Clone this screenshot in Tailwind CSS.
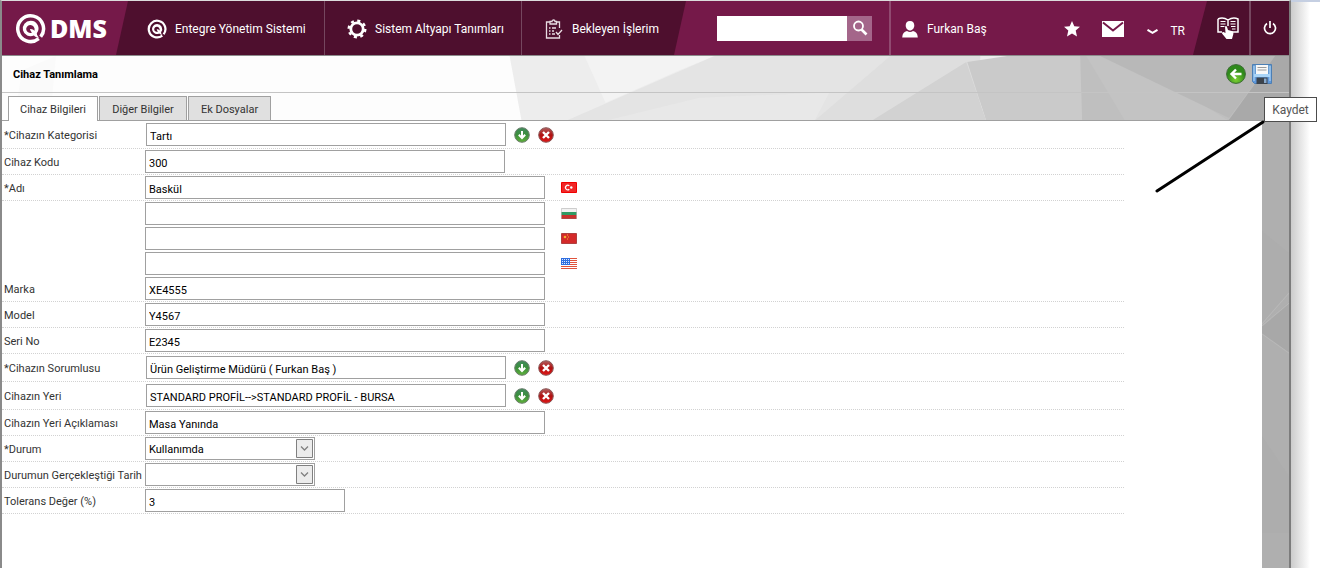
<!DOCTYPE html>
<html lang="tr">
<head>
<meta charset="utf-8">
<meta name="viewport" content="width=device-width, initial-scale=1">
<title>QDMS - Cihaz Tanımlama</title>
<script src="https://cdn.jsdelivr.net/npm/@tailwindcss/browser@4"></script>
</head>
<body class="relative flex min-h-screen overflow-x-hidden bg-white font-['Roboto','Noto_Sans',sans-serif] text-[11px] text-[#333]">

<svg class="absolute size-0" aria-hidden="true">
  <defs>
    <linearGradient id="green" x1="0" y1="0" x2="0" y2="1"><stop offset="0" stop-color="#3f8a5c"/><stop offset=".5" stop-color="#3c8f3c"/><stop offset="1" stop-color="#5fb13a"/></linearGradient>
    <linearGradient id="red" x1="0" y1="0" x2="0" y2="1"><stop offset="0" stop-color="#b06060"/><stop offset=".5" stop-color="#b01010"/><stop offset="1" stop-color="#e01818"/></linearGradient>
    <symbol id="pick" viewBox="0 0 16 16"><circle cx="8" cy="8" r="7.300" fill="url(#green)" stroke="#6b7d6c"/><path d="M8 4v7M4.800 7.800 8 11l3.200-3.200" fill="none" stroke="#fff" stroke-width="2"/></symbol>
    <symbol id="clear" viewBox="0 0 16 16"><circle cx="8" cy="8" r="7.300" fill="url(#red)" stroke="#8a5a5a"/><path d="m5 5 6 6M11 5l-6 6" stroke="#fff" stroke-width="2.400"/></symbol>
    <symbol id="q" viewBox="0 0 32 32"><path d="M26.500 24.500A13.300 13.300 0 1 0 24.500 26.500" fill="none" stroke="currentColor" stroke-width="3.600"/><path d="M16 8a8 8 0 1 0 3.500 15.200c1.500 1.500 3.300 2.300 5.500 2.300-1.500-1-2.300-2.300-2.500-4.500A8 8 0 0 0 16 8Zm-.5 4.500a4.500 4.500 0 0 1 4.500 6c-1-1.500-2.500-2.200-4.500-2 .2 1.400.8 2.500 2 3.500a4 4 0 1 1-2-7.500Z" fill="currentColor" fill-rule="evenodd"/></symbol>
  </defs>
</svg>

<div class="flex min-w-0 flex-1 flex-col border-t border-r-2 border-l-2 border-t-[#dcdcdc] border-r-[#7c7c7c] border-l-[#8a8a8a]">
  <header class="flex h-[55px] border-b border-[#8c8c8c] bg-[#751949] text-[12px] text-white">
    <a href="#" aria-label="QDMS" class="flex w-[114px] shrink-0 items-center gap-1 pl-[13px]">
      <svg class="size-[31px] shrink-0"><use href="#q"/></svg>
      <span class="font-['Open_Sans',sans-serif] text-[25px] leading-none font-extrabold">DMS</span>
    </a>
    <nav class="flex w-[570px] shrink-0 bg-[#4e0f2e] [clip-path:polygon(12px_0,100%_0,calc(100%-12px)_100%,0_100%)]">
      <a href="#" class="flex w-[209px] items-center gap-2 border-r border-[#75475f] pt-[2px] pl-[31px]">
        <svg class="size-5"><use href="#q"/></svg>Entegre Yönetim Sistemi</a>
      <a href="#" class="flex w-[197px] items-center gap-2 border-r border-[#75475f] pt-[2px] pl-[22px]">
        <svg class="size-5" viewBox="0 0 20 20"><circle cx="10" cy="10" r="6.200" fill="none" stroke="#fff" stroke-width="2.800"/><circle cx="10" cy="10" r="8.300" fill="none" stroke="#fff" stroke-width="2.400" stroke-dasharray="3.100 3.419"/></svg>Sistem Altyapı Tanımları</a>
      <a href="#" class="flex flex-1 items-center gap-2 pt-[2px] pl-[22px]">
        <svg class="size-5" viewBox="0 0 20 20" fill="none" stroke="#e8dce2" stroke-width="1.300"><path d="M6 3H2.500v16h13v-3M12 3h3.500v6M6 2.500h2C8 .500 11 .500 11 2.500h1.500V5h-6.500zM12 13l2 2.500 4-4.500"/><path d="M5 9h1.500M8 9h4M5 12h1.500M8 12h2M5 15h1.500M8 15h3"/></svg>Bekleyen İşlerim</a>
    </nav>
    <form class="ml-[31px] flex shrink-0 items-center">
      <input type="search" aria-label="Ara" class="h-[25px] w-[130px] bg-white px-1 text-black outline-none">
      <button type="button" aria-label="Ara" class="grid h-[25px] w-[25px] place-items-center bg-[#a4668a]">
        <svg class="size-4" viewBox="0 0 16 16" fill="none" stroke="#fff"><circle cx="6.500" cy="6" r="4.500" stroke-width="1.800"/><path d="m9.500 9.500 5 5" stroke-width="2.600"/></svg>
      </button>
    </form>
    <div class="ml-[17px] flex flex-1 items-center border-l-2 border-[#904a70] pt-[2px] pl-[10px]">
      <svg class="mr-[8px] size-[18px]" viewBox="0 0 18 18" fill="#fff"><path d="M9 1c3 0 4.300 2 4.300 4.500S11.500 10.500 9 10.500 4.700 8 4.700 5.500 6 1 9 1ZM6 11c2 1.200 4 1.200 6 0 3 .5 4.500 2.500 4.800 6.500H1.200C1.500 13.500 3 11.500 6 11Z"/></svg>
      <span>Furkan Baş</span>
      <button type="button" aria-label="Favoriler" class="mr-[22px] ml-auto"><svg class="size-4" viewBox="0 0 16 16" fill="#fff"><path d="m8 0 2.300 5.200 5.700.6-4.300 3.800L13 15.500l-5-3-5 3 1.300-5.900L0 5.800l5.700-.6z"/></svg></button>
      <button type="button" aria-label="Mesajlar" class="mr-[23px]"><svg class="h-4 w-[22px]" viewBox="0 0 22 16"><path d="M0 0h22v16H0z" fill="#fff"/><path d="m1 1.500 10 8 10-8" fill="none" stroke="#751949" stroke-width="2"/></svg></button>
      <button type="button" class="mr-[8px] flex items-center gap-3 pt-1"><svg class="h-[5px] w-[11px]" viewBox="0 0 11 5" fill="none" stroke="#fff" stroke-width="2"><path d="M.5.800 5.500 3.800 10.500.8"/></svg>TR</button>
    </div>
    <div class="flex w-[96px] shrink-0 bg-[#4e0f2e] [clip-path:polygon(14px_0,100%_0,100%_100%,0_100%)]">
      <button type="button" aria-label="Yardım" class="w-[58px] border-r-2 border-[#75475f] pl-[24px]">
        <svg class="h-[23px] w-[22px]" viewBox="0 0 22 23"><path d="M1 2c4-2 7-1 10 1 3-2 6-3 10-1v13h-6M1 2v13h4M11 3v6" fill="none" stroke="#fff" stroke-width="1.500"/><path d="M3.500 4.500h5M3.500 7h5M3.500 9.500h4M13.500 4.500h5M13.500 7h5M14 9.500h4.500M15 12h3.500" stroke="#fff"/><path d="M8 9.500q1.300-1 2 .5l1 3 4.500 1.200q1.500.8.800 3L15 22H9.500L5 16.500q-.3-1.800 1.500-1.500L8.500 16z" fill="#fff"/></svg>
      </button>
      <button type="button" aria-label="Çıkış" class="grid flex-1 place-items-center">
        <svg class="size-[14px]" viewBox="0 0 14 14" fill="none" stroke="#fff" stroke-width="1.700"><path d="M4 2.500a5.500 5.500 0 1 0 6 0M7 0v7"/></svg>
      </button>
    </div>
  </header>

  <div class="relative">
    <svg class="absolute inset-0 h-full w-full" viewBox="2 56 1288 64" preserveAspectRatio="none" aria-hidden="true">
      <path d="M0 56h1290v64H0z" fill="#fdfdfd"/>
      <path d="M22 70 56 56l-6 64H14z" fill="#fafafa"/>
      <path d="M510 56h780v64H522z" fill="#ededed"/>
      <path d="M585 56h130l-35 14-74 32z" fill="#f3f3f3"/>
      <path d="M715 56h200v64H566z" fill="#e4e4e4"/>
      <path d="m700 97 130-5-15 28H605z" fill="#e8e8e8"/>
      <path d="M891 56h90v64H815z" fill="#dedede"/>
      <path d="M967 62l20 58H872z" fill="#d2d2d2"/>
      <path d="M968 62l40-6h90v64H987z" fill="#cacaca"/>
      <path d="M1081 56h209v64h-207z" fill="#bfbfbf"/>
      <path d="M1087 56h40l103 64h-104z" fill="#c3c3c3"/>
      <path d="M1101 56h175l-46 61z" fill="#b8b8b8"/>
      <path d="M1276 56h14v64h-61z" fill="#a9a9a9"/>
    </svg>
    <div class="relative flex h-[37px] items-center border-b border-[#c4c4c4] pr-[17px] pl-[11px]">
      <h1 class="flex-1 pt-[2px] font-bold text-black">Cihaz Tanımlama</h1>
      <button type="button" aria-label="Geri" class="mr-[6px]">
        <svg class="size-5" viewBox="0 0 20 20"><defs><radialGradient id="back" cy=".8"><stop offset="0" stop-color="#7cd032"/><stop offset="1" stop-color="#2f8a1c"/></radialGradient></defs><circle cx="10" cy="10" r="9.400" fill="url(#back)" stroke="#3d6b35"/><path d="M15.500 10H6M10 5.500 5.500 10l4.500 4.500" fill="none" stroke="#fff" stroke-width="2.400"/></svg>
      </button>
      <button type="button" aria-label="Kaydet">
        <svg class="size-5" viewBox="0 0 20 20"><defs><linearGradient id="disk" x1="0" y1="0" x2="0" y2="1"><stop offset="0" stop-color="#6d9fd0"/><stop offset="1" stop-color="#5c96dc"/></linearGradient></defs><path d="M.5.500h19v19h-17l-2-2z" fill="url(#disk)" stroke="#4c7fb5"/><path d="M2 2v15M18 2v15" stroke="#b9dcf8"/><path d="M4 1h12v9H4z" fill="#f8f8f8"/><path d="M5.500 3.500h9M5.500 6h9" stroke="#9a9a9a"/><path d="M2 10h16v3H2z" fill="#a9d4f7"/><path d="M4.500 13.500h11V20h-11z" fill="#3c434c"/><path d="M12 14.500h2.500V19H12z" fill="#88a9cc"/></svg>
      </button>
    </div>
    <div role="tablist" class="relative flex h-7 items-end gap-px border-b border-[#a0a0a0] pl-[6px]">
      <button role="tab" aria-selected="true" type="button" class="-mb-px h-[25px] w-[90px] border border-b-0 border-[#a0a0a0] bg-white pt-[2px]">Cihaz Bilgileri</button>
      <button role="tab" aria-selected="false" type="button" class="h-6 w-[88px] border border-b-0 border-[#a0a0a0] bg-[#e0e0e0] pt-[3px]">Diğer Bilgiler</button>
      <button role="tab" aria-selected="false" type="button" class="h-6 w-[83px] border border-b-0 border-[#a0a0a0] bg-[#e0e0e0] pt-[3px]">Ek Dosyalar</button>
    </div>
  </div>

  <div class="flex flex-1">
    <form class="min-w-0 flex-1 bg-white pr-[138px] text-[#333]">
      <div class="flex h-7 items-center border-b border-dotted border-[#d2d2d2]">
        <label for="kategori" class="w-[144px] shrink-0 pt-[3px] pl-[2px] whitespace-nowrap">*Cihazın Kategorisi</label>
        <input id="kategori" value="Tartı" class="h-[23px] w-[360px] border border-[#a0a0a0] px-[3px] pt-[4px] text-black">
        <button type="button" aria-label="Seç" class="ml-2"><svg class="size-4"><use href="#pick"/></svg></button>
        <button type="button" aria-label="Temizle" class="ml-2"><svg class="size-4"><use href="#clear"/></svg></button>
      </div>
      <div class="flex h-[26px] items-center border-b border-dotted border-[#d2d2d2]">
        <label for="kod" class="w-[143px] shrink-0 pt-[3px] pl-[2px] whitespace-nowrap">Cihaz Kodu</label>
        <input id="kod" value="300" class="h-[23px] w-[360px] border border-[#a0a0a0] px-[3px] pt-[4px] text-black">
      </div>
      <div class="flex h-[26px] items-center border-b border-dotted border-[#d2d2d2]">
        <label for="adi" class="w-[143px] shrink-0 pt-[3px] pl-[2px] whitespace-nowrap">*Adı</label>
        <input id="adi" value="Baskül" class="h-[23px] w-[400px] border border-[#a0a0a0] px-[3px] pt-[4px] text-black">
        <svg class="ml-4 h-[11px] w-4" viewBox="0 0 16 11" role="img" aria-label="Türkçe"><path d="M.5.500h15v10H.5z" fill="#f02828" stroke="#f00000"/><path d="M8.300 3.800a2.300 2.300 0 1 0 0 3.500" fill="none" stroke="#fff" stroke-width="1.200"/><circle cx="10.300" cy="5.500" r="1.200" fill="#fff"/></svg>
      </div>
      <div class="flex h-[25px] items-center pl-[143px]">
        <input aria-label="Adı (Bulgarca)" class="h-[23px] w-[400px] border border-[#a0a0a0] px-[3px] text-black">
        <svg class="ml-4 h-[11px] w-4" viewBox="0 0 16 11" role="img" aria-label="Bulgarca"><path d="M.5 0h15v4H.5z" fill="#f2f2f2"/><path d="M.5 4h15v3H.5z" fill="#2f9a63"/><path d="M.5 7h15v4H.5z" fill="#c8322e"/><path d="M.5.500h15v10H.5z" fill="none" stroke="#777" stroke-opacity=".3"/></svg>
      </div>
      <div class="flex h-[25px] items-center pl-[143px]">
        <input aria-label="Adı (Çince)" class="h-[23px] w-[400px] border border-[#a0a0a0] px-[3px] text-black">
        <svg class="ml-4 h-[11px] w-4" viewBox="0 0 16 11" role="img" aria-label="Çince"><path d="M.5.500h15v10H.5z" fill="#d42a2a" stroke="#b04040"/><circle cx="4" cy="4" r="1.300" fill="#f4b030"/><path d="M6 2h1M7 4h1M6 6h1" stroke="#f4b030"/></svg>
      </div>
      <div class="flex h-[25px] items-center pl-[143px]">
        <input aria-label="Adı (İngilizce)" class="h-[23px] w-[400px] border border-[#a0a0a0] px-[3px] text-black">
        <svg class="ml-4 h-[11px] w-4" viewBox="0 0 16 11" role="img" aria-label="İngilizce"><path d="M0 0h16v11H0z" fill="#fff"/><path d="M0 .5h16M0 2.500h16M0 4.500h16M0 6.500h16M0 8.500h16M0 10.500h16" stroke="#e0523c"/><path d="M0 0h9v7H0z" fill="#2f6fe0"/><path d="M1 1.500h8M1 3.500h8M1 5.500h8" stroke="#dfe8ff" stroke-dasharray="1 1"/></svg>
      </div>
      <div class="flex h-[26px] items-center border-b border-dotted border-[#d2d2d2]">
        <label for="marka" class="w-[143px] shrink-0 pt-[3px] pl-[2px] whitespace-nowrap">Marka</label>
        <input id="marka" value="XE4555" class="h-[23px] w-[400px] border border-[#a0a0a0] px-[3px] pt-[4px] text-black">
      </div>
      <div class="flex h-[26px] items-center border-b border-dotted border-[#d2d2d2]">
        <label for="model" class="w-[143px] shrink-0 pt-[3px] pl-[2px] whitespace-nowrap">Model</label>
        <input id="model" value="Y4567" class="h-[23px] w-[400px] border border-[#a0a0a0] px-[3px] pt-[4px] text-black">
      </div>
      <div class="flex h-[26px] items-center border-b border-dotted border-[#d2d2d2]">
        <label for="seri" class="w-[143px] shrink-0 pt-[3px] pl-[2px] whitespace-nowrap">Seri No</label>
        <input id="seri" value="E2345" class="h-[23px] w-[400px] border border-[#a0a0a0] px-[3px] pt-[4px] text-black">
      </div>
      <div class="flex h-7 items-center border-b border-dotted border-[#d2d2d2]">
        <label for="sorumlu" class="w-[144px] shrink-0 pt-[3px] pl-[2px] whitespace-nowrap">*Cihazın Sorumlusu</label>
        <input id="sorumlu" value="Ürün Geliştirme Müdürü ( Furkan Baş )" class="h-[23px] w-[360px] border border-[#a0a0a0] px-[3px] pt-[4px] text-black">
        <button type="button" aria-label="Seç" class="ml-2"><svg class="size-4"><use href="#pick"/></svg></button>
        <button type="button" aria-label="Temizle" class="ml-2"><svg class="size-4"><use href="#clear"/></svg></button>
      </div>
      <div class="flex h-7 items-center border-b border-dotted border-[#d2d2d2]">
        <label for="yer" class="w-[144px] shrink-0 pt-[3px] pl-[2px] whitespace-nowrap">Cihazın Yeri</label>
        <input id="yer" value="STANDARD PROFİL--&gt;STANDARD PROFİL - BURSA" class="h-[23px] w-[360px] border border-[#a0a0a0] px-[3px] pt-[4px] text-black">
        <button type="button" aria-label="Seç" class="ml-2"><svg class="size-4"><use href="#pick"/></svg></button>
        <button type="button" aria-label="Temizle" class="ml-2"><svg class="size-4"><use href="#clear"/></svg></button>
      </div>
      <div class="flex h-[26px] items-center border-b border-dotted border-[#d2d2d2]">
        <label for="aciklama" class="w-[143px] shrink-0 pt-[3px] pl-[2px] whitespace-nowrap">Cihazın Yeri Açıklaması</label>
        <input id="aciklama" value="Masa Yanında" class="h-[23px] w-[400px] border border-[#a0a0a0] px-[3px] pt-[4px] text-black">
      </div>
      <div class="flex h-[26px] items-center border-b border-dotted border-[#d2d2d2]">
        <label for="durum" class="w-[143px] shrink-0 pt-[3px] pl-[2px] whitespace-nowrap">*Durum</label>
        <div class="relative">
          <select id="durum" class="block h-[23px] w-[170px] appearance-none border border-[#a0a0a0] px-[3px] pt-[4px] text-black"><option>Kullanımda</option></select>
          <svg class="pointer-events-none absolute top-[2px] right-[2px] h-[19px] w-[17px]" viewBox="0 0 17 19" fill="none" stroke="#808080"><path d="M.5.500h16v18H.5z" fill="#ececec"/><path d="m5 7.500 3.500 3.500L12 7.500" stroke-width="1.300"/></svg>
        </div>
      </div>
      <div class="flex h-[26px] items-center border-b border-dotted border-[#d2d2d2]">
        <label for="tarih" class="w-[143px] shrink-0 pt-[3px] pl-[2px] whitespace-nowrap">Durumun Gerçekleştiği Tarih</label>
        <div class="relative">
          <select id="tarih" class="block h-[23px] w-[170px] appearance-none border border-[#a0a0a0] px-[3px] pt-[4px] text-black"><option></option></select>
          <svg class="pointer-events-none absolute top-[2px] right-[2px] h-[19px] w-[17px]" viewBox="0 0 17 19" fill="none" stroke="#808080"><path d="M.5.500h16v18H.5z" fill="#ececec"/><path d="m5 7.500 3.500 3.500L12 7.500" stroke-width="1.300"/></svg>
        </div>
      </div>
      <div class="flex h-[26px] items-center border-b border-dotted border-[#d2d2d2]">
        <label for="tolerans" class="w-[143px] shrink-0 pt-[3px] pl-[2px] whitespace-nowrap">Tolerans Değer (%)</label>
        <input id="tolerans" value="3" class="h-[23px] w-[200px] border border-[#a0a0a0] px-[3px] pt-[4px] text-black">
      </div>
    </form>
    <div class="w-[27px] shrink-0 bg-[#afafaf]">
      <svg class="h-[447px] w-full" viewBox="0 0 26 447" preserveAspectRatio="none" aria-hidden="true"><path d="M0 110 26 132v40L0 205z" fill="#adadad"/><path d="M26 181v51L0 213v-8z" fill="#a8a8a8"/><path d="m0 203 26-31M0 205l26-23M0 213l26 19" fill="none" stroke="#b8b8b8"/><path d="m0 315 26 40v57H0z" fill="#adadad"/></svg>
    </div>
  </div>
</div>
<div class="w-[29px] shrink-0 border-t-2 border-[#c5cfe2] bg-linear-to-r from-[#cccccc] to-white to-65%"></div>

<svg class="pointer-events-none absolute top-[120px] right-[54px] h-[74px] w-[112px]" viewBox="0 0 112 74" aria-hidden="true"><path d="M3 71 109 2" stroke="#000" stroke-width="3" stroke-linecap="round"/></svg>
<div role="tooltip" class="absolute top-[97px] right-[3px] grid h-[25px] w-[53px] place-items-center border border-[#4c4c4c] bg-white text-[12px] text-[#555]">Kaydet</div>
</body>
</html>
